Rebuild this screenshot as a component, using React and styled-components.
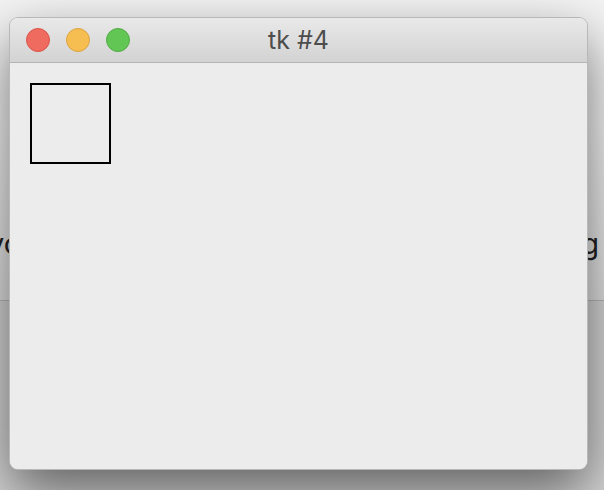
import React from "react";
import styled, { createGlobalStyle } from "styled-components";

const GlobalStyle = createGlobalStyle`
  html, body {
    margin: 0;
    padding: 0;
    width: 604px;
    height: 490px;
    overflow: hidden;
  }
  body {
    font-family: Inter, "Liberation Sans", sans-serif;
  }
`;

const Desktop = styled.div`
  position: relative;
  width: 604px;
  height: 490px;
  overflow: hidden;
  background: #d9d9d9;
`;

const BackPage = styled.div`
  display: flex;
  flex-direction: column;
  height: 100%;
`;

const BackTop = styled.div`
  height: 301px;
  background: linear-gradient(#f4f4f4 40%, #e2e2e2);
  display: flex;
  align-items: flex-start;
  padding-top: 226px;
  box-sizing: border-box;
  border-bottom: 1px solid #b9b9b9;
`;

const BackText = styled.div`
  flex: 1;
  display: flex;
  justify-content: space-between;
  margin: 0 5px 0 -12px;
  font-family: Inter, "Liberation Sans", sans-serif;
  font-size: 29px;
  line-height: 36px;
  color: #222;
`;

const BackBottom = styled.div`
  flex: 1;
  background: #d6d6d6;
`;

const Window = styled.div`
  position: absolute;
  left: 9px;
  top: 17px;
  width: 579px;
  height: 453px;
  box-sizing: border-box;
  display: flex;
  flex-direction: column;
  border-radius: 9px;
  overflow: hidden;
  border: 1px solid rgba(0, 0, 0, 0.22);
  box-shadow: 0 22px 55px rgba(0, 0, 0, 0.55);
  background: #ececec;
`;

const TitleBar = styled.div`
  position: relative;
  height: 44px;
  flex-shrink: 0;
  display: flex;
  align-items: center;
  padding-left: 16px;
  gap: 16px;
  background: linear-gradient(#e9e9e9, #d3d3d3);
  border-bottom: 1px solid #b4b4b4;
`;

const Light = styled.div`
  width: 24px;
  height: 24px;
  box-sizing: border-box;
  border-radius: 50%;
  background: ${(p) => p.$fill};
  border: 1px solid ${(p) => p.$edge};
`;

const Title = styled.div`
  position: absolute;
  left: 0;
  right: 0;
  text-align: center;
  font-size: 25px;
  color: #4d4d4d;
  pointer-events: none;
`;

const Content = styled.div`
  flex: 1;
  padding: 20px 20px;
  background: #ececec;
`;

const Square = styled.div`
  width: 81px;
  height: 81px;
  box-sizing: border-box;
  border: 2px solid #000;
`;

export default function App() {
  return (
    <>
      <GlobalStyle />
      <Desktop>
        <BackPage>
          <BackTop>
            <BackText>
              <span>yo</span>
              <span>g</span>
            </BackText>
          </BackTop>
          <BackBottom />
        </BackPage>
        <Window>
          <TitleBar>
            <Light $fill="#ef6b5f" $edge="#d9554a" />
            <Light $fill="#f6be50" $edge="#dba445" />
            <Light $fill="#62c655" $edge="#53ab46" />
            <Title>tk #4</Title>
          </TitleBar>
          <Content>
            <Square />
          </Content>
        </Window>
      </Desktop>
    </>
  );
}
